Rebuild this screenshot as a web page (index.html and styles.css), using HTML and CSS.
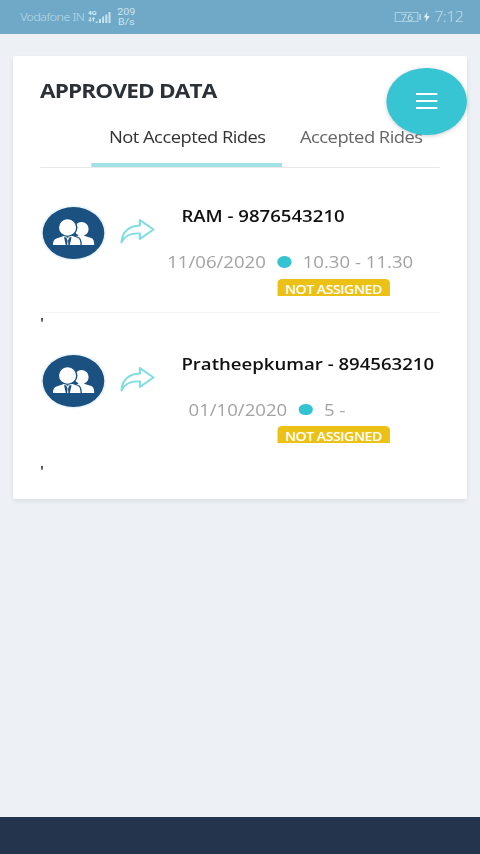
FILE: index.html
```html
<!DOCTYPE html>
<html lang="en">
<head>
    <meta charset="UTF-8">
    <meta name="viewport" content="width=device-width, initial-scale=1.0">
    <title>Approved Data</title>
    <link rel="stylesheet" href="styles.css">
</head>
<body>
    <div class="app">
        <header class="status-bar">
            <span class="carrier">Vodafone IN</span>
            <svg class="signal" width="20" height="14" viewBox="0 0 20 14">
                <text x="0" y="5.5">4G</text>
                <path d="M2 7v4M.8 9.7L2 11.2l1.2-1.5M4.8 11.5V8M3.8 9l1-1.3 1 1.3" class="thin"/>
                <path d="M7.6 11.5V13M10.3 9V13M13 6.5V13M15.7 4.5V13M18.4 2V13" class="bars"/>
            </svg>
            <span class="speed">209<br>B/s</span>
            <span class="battery">76</span>
            <svg class="bolt" width="6" height="10" viewBox="0 0 6 10"><path d="M3.6 0L.3 5.6h2.2L2 10l3.6-6H3.3z"/></svg>
            <span class="clock">7:12</span>
        </header>

        <main class="card">
            <h1>APPROVED DATA</h1>
            <button class="menu-btn" aria-label="Menu"><span></span><span></span><span></span></button>

            <nav class="tabs">
                <a class="tab active">Not Accepted Rides</a>
                <a class="tab">Accepted Rides</a>
            </nav>

            <section class="ride">
                <svg class="avatar" width="56" height="56" viewBox="0 0 56 56">
                    <circle cx="28" cy="28" r="27.5" class="ring"/>
                    <circle cx="28" cy="28" r="26"/>
                    <path class="person" d="M30 31h7.500l5.500 2q2.500 1 2.500 7H30z"/>
                    <path class="person" d="M32 29h5v3.500h-5z"/>
                    <ellipse class="person" cx="34.800" cy="24" rx="6" ry="7"/>
                    <path class="person edge" d="M10 40.600q0-6.500 3.500-7.600l6-2.500h8l4.500 2q2.500 1 2.500 8.100z"/>
                    <ellipse class="person edge" cx="23" cy="22.500" rx="7.800" ry="8.800"/>
                    <path d="M20 32l1.500 8h1.200l.3-4.500-.8-2 1-1.500 1 1.500-.8 2 .3 4.500h1.200l1.500-8-3.200 1z"/>
                </svg>
                <svg class="arrow" width="30" height="26" viewBox="0 0 30 26">
                    <path d="M1.500 24.500C2 13 8.500 8 17 7.500V2L28.500 11.500 17 21V15.500C9.500 15 4 18 1.500 24.500z"/>
                </svg>
                <div class="info">
                    <h2>RAM - 9876543210</h2>
                    <p class="time"><span>11/06/2020</span><i class="dot"></i><span>10.30 - 11.30</span></p>
                    <div class="status"><span class="badge">NOT ASSIGNED</span></div>
                </div>
            </section>
            <div class="tick">'</div>

            <section class="ride last">
                <svg class="avatar" width="56" height="56" viewBox="0 0 56 56">
                    <circle cx="28" cy="28" r="27.5" class="ring"/>
                    <circle cx="28" cy="28" r="26"/>
                    <path class="person" d="M30 31h7.500l5.500 2q2.500 1 2.500 7H30z"/>
                    <path class="person" d="M32 29h5v3.500h-5z"/>
                    <ellipse class="person" cx="34.800" cy="24" rx="6" ry="7"/>
                    <path class="person edge" d="M10 40.600q0-6.500 3.500-7.600l6-2.500h8l4.500 2q2.500 1 2.500 8.100z"/>
                    <ellipse class="person edge" cx="23" cy="22.500" rx="7.800" ry="8.800"/>
                    <path d="M20 32l1.500 8h1.200l.3-4.500-.8-2 1-1.500 1 1.500-.8 2 .3 4.500h1.200l1.500-8-3.200 1z"/>
                </svg>
                <svg class="arrow" width="30" height="26" viewBox="0 0 30 26">
                    <path d="M1.500 24.500C2 13 8.500 8 17 7.500V2L28.500 11.500 17 21V15.500C9.500 15 4 18 1.500 24.500z"/>
                </svg>
                <div class="info">
                    <h2>Pratheepkumar - 894563210</h2>
                    <p class="time short"><span>01/10/2020</span><i class="dot"></i><span>5 -</span></p>
                    <div class="status"><span class="badge">NOT ASSIGNED</span></div>
                </div>
            </section>
            <div class="tick">'</div>
        </main>

        <footer class="bottom-bar"></footer>
    </div>
</body>
</html>
```

FILE: styles.css
```css
* {
    box-sizing: border-box;
}

body {
    margin: 0;
    background-color: #edf1f6;
    font-family: "Open Sans", "Noto Sans", sans-serif;
    overflow: hidden;
}

/* 405px layout stretched to the full 480px width */
.app {
    width: 405px;
    height: 854px;
    display: flex;
    flex-direction: column;
    transform: scaleX(1.18519);
    transform-origin: 0 0;
}

.status-bar {
    height: 33.5px;
    flex: none;
    display: flex;
    align-items: center;
    padding: 0 14px 0 17px;
    background-color: #70a9c7;
    color: #b9dbea;
    font-family: Roboto, sans-serif;
}

.carrier {
    width: 57px;
    font-family: "Noto Sans", sans-serif;
    font-size: 10.5px;
    letter-spacing: -0.45px;
    font-weight: 300;
    white-space: nowrap;
}

.signal text {
    font-size: 6px;
    font-weight: bold;
    fill: #d8edf5;
}

.signal path {
    fill: none;
    stroke: #c8e4ef;
}

.signal .thin {
    stroke-width: 1;
}

.signal .bars {
    stroke-width: 1.7;
}

.speed {
    margin-left: 5px;
    font-size: 9px;
    line-height: 10px;
    text-align: center;
    color: #cde6f0;
}

.battery {
    position: relative;
    margin-left: auto;
    width: 20px;
    height: 10px;
    border: 1px solid #a5cfe2;
    font-size: 9.5px;
    line-height: 9px;
    text-align: center;
}

.battery::after {
    content: "";
    position: absolute;
    right: -3px;
    top: 1px;
    width: 1.5px;
    height: 6px;
    background-color: #c8e4ef;
}

.bolt {
    margin: 0 3px 0 4px;
    fill: #d8edf5;
}

.clock {
    font-family: "Noto Sans", sans-serif;
    font-size: 13.8px;
    letter-spacing: -0.6px;
    font-weight: 300;
}

.card {
    position: relative;
    width: 382.5px;
    height: 442.5px;
    margin: 22.5px auto 0 11.25px;
    padding: 0 22.5px;
    background-color: #fff;
    border-radius: 2px;
    box-shadow: 0 2px 5px rgba(0, 0, 0, 0.08);
}

h1 {
    margin: 0;
    padding-top: 21.5px;
    height: 63px;
    font-size: 19px;
    line-height: 27px;
    font-weight: 700;
    letter-spacing: -0.7px;
    color: #2c3037;
}

.menu-btn {
    position: absolute;
    top: 11.5px;
    right: 0;
    width: 67.5px;
    height: 67.5px;
    padding: 0;
    border: 0;
    border-radius: 50%;
    background-color: #37c5d3;
    box-shadow: 0 1px 4px rgba(0, 0, 0, 0.2);
    display: flex;
    flex-direction: column;
    align-items: center;
    justify-content: center;
    gap: 5px;
}

.menu-btn span {
    width: 18px;
    height: 2px;
    background-color: #fff;
}

.tabs {
    display: flex;
    height: 48.5px;
    padding-left: 43.4px;
    border-bottom: 1px solid #e9e9e9;
}

.tab {
    height: 47.5px;
    padding: 6px 14.8px 0;
    font-size: 15.5px;
    line-height: 24px;
    letter-spacing: -0.45px;
    color: #666;
    white-space: nowrap;
}

.tab.active {
    width: 161.2px;
    color: #333;
    border-bottom: 4.5px solid #a0e2e5;
}

.ride {
    display: flex;
    height: 136px;
    margin-top: 9.5px;
    border-bottom: 1px solid #f4f4f4;
}

.tick + .ride {
    margin-top: 0;
}

.ride.last {
    border-color: transparent;
}

.avatar {
    flex: none;
    margin-top: 28px;
    fill: #1b5180;
}

.avatar .ring {
    fill: #e9f5fb;
}

.avatar .person {
    fill: #fff;
}

.avatar .edge {
    stroke: #1b5180;
    stroke-width: 1.2;
}

.arrow {
    flex: none;
    margin: 41px 0 0 11.5px;
    fill: none;
    stroke: #7fdde2;
    stroke-width: 1.8;
    stroke-linejoin: round;
}

.info {
    flex: 1;
    min-width: 0;
    margin-left: 9.8px;
}

h2 {
    margin: 27px 0 0 12px;
    font-size: 15.7px;
    line-height: 24px;
    font-weight: 600;
    color: #111;
    white-space: nowrap;
}

.time {
    display: flex;
    align-items: center;
    margin: 22px 0 0 0;
    font-size: 15.7px;
    line-height: 24px;
    color: #a3a3a3;
    white-space: nowrap;
}

.time.short {
    margin-left: 18px;
}

.dot {
    width: 11.5px;
    height: 11.5px;
    margin: 0 9.8px;
    border-radius: 50%;
    background-color: #34c4d1;
}

.status {
    height: 17px;
    margin: 4.5px 0 0 92.5px;
    overflow: hidden;
    line-height: 0;
}

.badge {
    display: inline-block;
    width: 95.5px;
    height: 22px;
    border-radius: 4px;
    background-color: #ecc116;
    color: #fff;
    font-size: 12px;
    line-height: 22px;
    letter-spacing: -0.45px;
    font-weight: 600;
    text-align: center;
    vertical-align: top;
}

.tick {
    height: 11.5px;
    font-size: 14px;
    line-height: 20px;
    font-weight: 600;
    color: #333;
}

.bottom-bar {
    flex: none;
    height: 37px;
    margin-top: auto;
    background-color: #25344d;
}
```
